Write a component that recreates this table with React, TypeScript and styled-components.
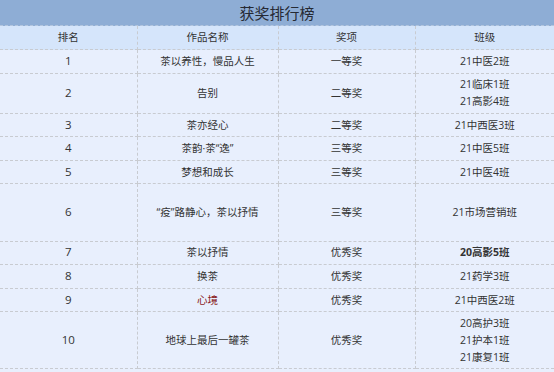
import React, { FC } from 'react';
import styled, { createGlobalStyle } from 'styled-components';

interface Award {
  rank: number;
  title: string;
  prize: string;
  classes: string[];
  lines?: number;
  highlight?: boolean;
  strongClass?: boolean;
}

const LINE = 16.75;

const awards: Award[] = [
  { rank: 1, title: '茶以养性，慢品人生', prize: '一等奖', classes: ['21中医2班'] },
  { rank: 2, title: '告别', prize: '二等奖', classes: ['21临床1班', '21高影4班'] },
  { rank: 3, title: '茶亦经心', prize: '二等奖', classes: ['21中西医3班'] },
  { rank: 4, title: '茶韵·茶“逸”', prize: '三等奖', classes: ['21中医5班'] },
  { rank: 5, title: '梦想和成长', prize: '三等奖', classes: ['21中医4班'] },
  // this row is as tall as a three-line row in the original sheet
  { rank: 6, title: '“疫”路静心，茶以抒情', prize: '三等奖', classes: ['21市场营销班'], lines: 3 },
  { rank: 7, title: '茶以抒情', prize: '优秀奖', classes: ['20高影5班'], strongClass: true },
  { rank: 8, title: '换茶', prize: '优秀奖', classes: ['21药学3班'] },
  { rank: 9, title: '心境', prize: '优秀奖', classes: ['21中西医2班'], highlight: true },
  {
    rank: 10,
    title: '地球上最后一罐茶',
    prize: '优秀奖',
    classes: ['20高护3班', '21护本1班', '21康复1班'],
  },
];

const GlobalStyle = createGlobalStyle`
  html, body {
    margin: 0;
    padding: 0;
    background: #e8effd;
  }
  body {
    font-family: "Open Sans", "Noto Sans CJK SC", sans-serif;
    color: #333;
  }
`;

const Board = styled.div`
  width: 554px;
  height: 372px;
  overflow: hidden;
  background: #e8effd;
`;

const TitleBar = styled.div`
  height: 26px;
  display: flex;
  align-items: center;
  justify-content: center;
  background: #8eadd5;
  font-family: "Noto Sans CJK SC", sans-serif;
  font-size: 15px;
  color: #262a33;
  border-bottom: 1px dashed #b4c6de;
  box-sizing: border-box;
`;

const Table = styled.table`
  width: 554px;
  table-layout: fixed;
  border-collapse: collapse;
  font-size: 10.5px;
  line-height: ${LINE}px;
`;

const HeadCell = styled.th`
  height: 23px;
  padding: 0;
  background: #d5e5fb;
  font-weight: normal;
  font-family: "Noto Sans CJK SC", sans-serif;
  color: #333;
  text-align: center;
  border: 1px dashed #c8cbd1;
  border-top: none;
  &:first-child {
    border-left: none;
  }
  &:last-child {
    border-right: none;
  }
`;

const Row = styled.tr<{ $lines: number }>`
  height: ${(p) => p.$lines * LINE + 6.8}px;
`;

const Cell = styled.td<{ $tone?: 'red'; $bold?: boolean }>`
  padding: 2.9px 0;
  text-align: center;
  vertical-align: middle;
  color: ${(p) => (p.$tone === 'red' ? '#8a1c1c' : '#333')};
  font-weight: ${(p) => (p.$bold ? 700 : 400)};
  border: 1px dashed #c8cbd1;
  &:first-child {
    border-left: none;
    font-size: 11.5px;
  }
  &:last-child {
    border-right: none;
  }
`;

const ClassLine = styled.div`
  white-space: nowrap;
`;

const App: FC = () => (
  <Board>
    <GlobalStyle />
    <TitleBar>获奖排行榜</TitleBar>
    <Table>
      <colgroup>
        <col style={{ width: 137 }} />
        <col style={{ width: 141 }} />
        <col style={{ width: 137 }} />
        <col style={{ width: 139 }} />
      </colgroup>
      <thead>
        <tr>
          <HeadCell>排名</HeadCell>
          <HeadCell>作品名称</HeadCell>
          <HeadCell>奖项</HeadCell>
          <HeadCell>班级</HeadCell>
        </tr>
      </thead>
      <tbody>
        {awards.map((a) => (
          <Row key={a.rank} $lines={a.lines ?? a.classes.length}>
            <Cell>{a.rank}</Cell>
            <Cell $tone={a.highlight ? 'red' : undefined}>{a.title}</Cell>
            <Cell>{a.prize}</Cell>
            <Cell $bold={a.strongClass}>
              {a.classes.map((c) => (
                <ClassLine key={c}>{c}</ClassLine>
              ))}
            </Cell>
          </Row>
        ))}
      </tbody>
    </Table>
  </Board>
);

export default App;
